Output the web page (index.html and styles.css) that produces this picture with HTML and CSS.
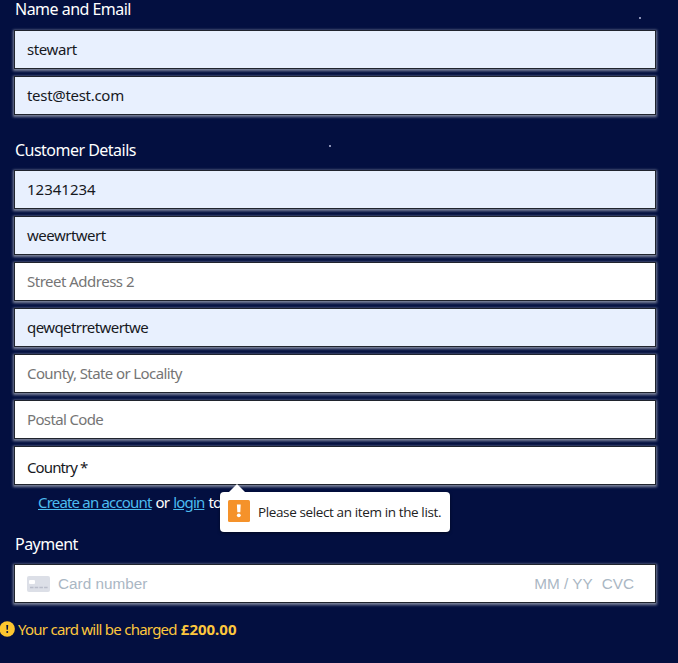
FILE: index.html
```html
<!DOCTYPE html>
<html lang="en">
<head>
<meta charset="utf-8">
<title>Checkout</title>
<link rel="stylesheet" href="styles.css">
</head>
<body>
<main class="checkout">
  <section class="group contact">
    <h2><span class="t-name">Name and Email</span></h2>
    <div class="field filled"><span class="t-stewart">stewart</span></div>
    <div class="field filled"><span class="t-mail">test@test.com</span></div>
  </section>
  <section class="group details">
    <h2><span class="t-cust">Customer Details</span></h2>
    <div class="field filled"><span class="t-num">12341234</span></div>
    <div class="field filled"><span class="t-street">weewrtwert</span></div>
    <div class="field empty"><span class="t-street2">Street Address 2</span></div>
    <div class="field filled"><span class="t-city">qewqetrretwertwe</span></div>
    <div class="field empty"><span class="t-county">County, State or Locality</span></div>
    <div class="field empty"><span class="t-post">Postal Code</span></div>
    <div class="field select"><span class="t-country">Country *</span>
      <div class="tooltip" role="alert">
        <svg class="pointer" width="18" height="9" viewBox="0 0 18 9"><path d="M0 9L9 0L18 9Z" fill="#fff"/></svg>
        <svg class="warn" width="22" height="22" viewBox="0 0 22 22"><rect width="22" height="22" rx="1.5" fill="#f5922a"/><path d="M8.9 4.5h3.8l-.4 7.8H9.3z" fill="#fff"/><circle cx="10.8" cy="15.3" r="1.9" fill="#fff"/></svg>
        <span class="t-tip">Please select an item in the list.</span>
      </div>
    </div>
    <p class="account"><a class="t-create">Create an account</a> <span>or</span> <a class="t-login">login</a> <span>to</span></p>
  </section>
  <section class="group payment">
    <h2><span class="t-pay">Payment</span></h2>
    <div class="field card">
      <svg class="card-icon" width="23" height="16" viewBox="0 0 23 16"><rect width="23" height="16" rx="2" fill="#dcdfe7"/><rect x="2" y="4" width="6" height="4" rx="1" fill="#fff"/><path d="M3 11.5h18" stroke="#b9bdca" stroke-width="1.3" stroke-dasharray="3.5 1.2"/></svg>
      <span class="number">Card number</span><span class="expiry">MM / YY</span><span class="cvc">CVC</span>
    </div>
    <p class="charge">
      <svg width="16" height="16" viewBox="0 0 16 16"><circle cx="7.2" cy="8" r="7.7" fill="#fdc62f"/><path d="M6.3 4h1.9l-.3 4.8H6.6z" fill="#071040"/><circle cx="7.25" cy="11" r="1" fill="#071040"/></svg>
      <span class="t-charge">Your card will be charged</span><strong>£200.00</strong>
    </p>
  </section>
  <i class="speck one"></i><i class="speck two"></i>
</main>
</body>
</html>
```
FILE: styles.css
```css
* { box-sizing: border-box; }
body {
  margin: 0;
  height: 663px;
  overflow: hidden;
  background: #030f40;
  color: #fff;
  font: 15px/20px "Noto Sans", "Open Sans", sans-serif;
}
.checkout { position: relative; padding-left: 14px; width: 656px; white-space: nowrap; }
.group { display: flex; flex-direction: column; gap: 7px; }
h2 { margin: 0 0 3px 1px; height: 20px; font-size: 16px; font-weight: 400; line-height: 20px; letter-spacing: -.52px; }
.contact h2 { line-height: 19px; }
.details { margin-top: 25px; }
.payment { margin-top: 21px; }
.field {
  position: relative;
  display: flex;
  align-items: center;
  height: 39px;
  padding: 0 12px 1px;
  border: 1px solid #20242d;
  background: #fff;
  color: #17191e;
  box-shadow: 0 1px 2.5px 1px rgba(190, 194, 204, .66);
}
.filled { background: #e8f0fe; }
.empty { color: #757575; }
.select { padding-top: 2px; padding-bottom: 0; }
.t-stewart { letter-spacing: -.4px; }
.t-mail { letter-spacing: -.3px; }
.t-street, .t-street2 { letter-spacing: -.5px; }
.t-city { letter-spacing: -.57px; }
.t-county { letter-spacing: -.6px; }
.t-post { letter-spacing: -.65px; }
.t-country { letter-spacing: -.9px; }
.account { display: flex; gap: 4px; margin: 0 0 0 24px; height: 21px; letter-spacing: -.82px; }
.account a { color: #4cbcf0; text-decoration: underline; }
.tooltip {
  position: absolute;
  left: 205px;
  top: 45px;
  z-index: 1;
  display: flex;
  align-items: center;
  gap: 8px;
  width: 230px;
  height: 40px;
  padding: 0 8px 2px;
  border-radius: 4px;
  background: #fff;
  color: #222;
  box-shadow: 0 1px 3px rgba(0, 0, 0, .5);
}
.pointer { position: absolute; left: 8px; top: -8px; }
.warn { flex: none; }
.t-tip { margin-top: 2px; font: 13.5px/20px "Open Sans", sans-serif; letter-spacing: -.38px; }
.card { padding-bottom: 0; font: 15.3px/20px "Liberation Sans", Arial, sans-serif; color: #aab7c4; }
.card-icon { margin-right: 8px; }
.expiry { margin-left: auto; }
.cvc { margin: 0 9px 0 9px; }
.charge { display: flex; align-items: center; margin: 9px 0 0 -14px; height: 19px; line-height: 18px; color: #fdc73d; }
.charge svg { margin-right: 2px; }
.t-charge { letter-spacing: -.75px; }
.charge strong { margin-left: 4px; }
.speck { position: absolute; width: 2px; height: 2px; background: #8c91b5; }
.one { left: 639px; top: 17px; }
.two { left: 329px; top: 145px; }
```
